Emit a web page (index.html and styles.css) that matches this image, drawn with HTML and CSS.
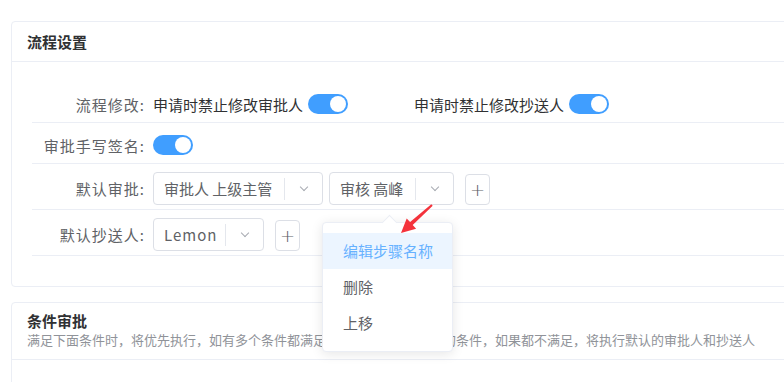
FILE: index.html
```html
<!DOCTYPE html>
<html lang="zh-CN">
<head>
  <meta charset="UTF-8">
  <title>流程设置</title>
  <link rel="stylesheet" href="styles.css">
</head>
<body>
  <div class="page">
    <div class="card">
      <div class="card-header">流程设置</div>
      <div class="form">
        <div class="row">
          <div class="label">流程修改:</div>
          <div class="field">
            <span class="opt">申请时禁止修改审批人</span>
            <span class="switch"></span>
            <span class="opt opt-2">申请时禁止修改抄送人</span>
            <span class="switch"></span>
          </div>
        </div>
        <div class="row">
          <div class="label">审批手写签名:</div>
          <div class="field"><span class="switch switch-only"></span></div>
        </div>
        <div class="row row-tall">
          <div class="label">默认审批:</div>
          <div class="field">
            <div class="select s-1"><span class="val">审批人 上级主管</span><span class="suffix"><i class="chev"></i></span></div>
            <div class="select s-2"><span class="val">审核 高峰</span><span class="suffix"><i class="chev"></i></span></div>
            <button class="plus">+</button>
          </div>
        </div>
        <div class="row row-tall">
          <div class="label">默认抄送人:</div>
          <div class="field">
            <div class="select s-3"><span class="val">Lemon</span><span class="suffix"><i class="chev"></i></span></div>
            <button class="plus">+</button>
          </div>
        </div>
      </div>
    </div>

    <div class="card card-2">
      <div class="card-header header-2">
        <div class="title">条件审批</div>
        <div class="sub">满足下面条件时，将优先执行，如有多个条件都满足，将执行第一个满足的条件，如果都不满足，将执行默认的审批人和抄送人</div>
      </div>
    </div>

    <div class="menu">
      <div class="menu-item active">编辑步骤名称</div>
      <div class="menu-item">删除</div>
      <div class="menu-item">上移</div>
    </div>

    <svg class="pointer" width="42" height="36" viewBox="0 0 42 36">
      <path d="M6 33 L11.7 18.4 L15.1 22.1 L36.3 4.3 L37.7 5.7 L17.7 25.1 L21.1 28.8 Z" fill="#f4333c"/>
    </svg>
  </div>
</body>
</html>
```

FILE: styles.css
```css
* { box-sizing: border-box; }
body { margin: 0; background: #fff; font-family: "Noto Sans CJK SC", "Noto Sans", sans-serif; overflow: hidden; }
.page { position: relative; width: 1000px; padding: 21px 0 0 11px; }

.card { border: 1px solid #ebeef5; border-radius: 4px; background: #fff; width: 900px; }
.card-header { height: 40px; line-height: 40px; padding-left: 15px; border-bottom: 1px solid #ebeef5; font-size: 15px; font-weight: bold; color: #303133; }
.form { padding: 20px 0 30px 20px; }

.row { display: flex; align-items: center; padding: 8px 0 4px; border-bottom: 1px solid #ebeef5; min-height: 41px; }
.row-tall { min-height: 46px; }
.label { width: 113px; text-align: right; font-size: 15px; color: #606266; margin-right: 8px; letter-spacing: 1px; }
.field { display: flex; align-items: center; font-size: 15px; color: #303133; }
.opt-2 { margin-left: 66px; }
.switch { position: relative; display: inline-block; width: 40px; height: 20px; border-radius: 10px; background: #409eff; margin-left: 5px; }
.switch::after { content: ""; position: absolute; right: 2px; top: 2px; width: 16px; height: 16px; border-radius: 50%; background: #fff; }
.switch-only { margin-left: 0; }

.select { display: flex; align-items: center; height: 33px; border: 1px solid #dcdfe6; border-radius: 4px; color: #606266; }
.select .val { flex: 1; padding-left: 10px; white-space: nowrap; }
.select .suffix { display: flex; align-items: center; justify-content: center; width: 38px; height: 22px; border-left: 1px solid #e4e7ed; }
.chev { width: 6px; height: 6px; border-right: 1px solid #a8abb2; border-bottom: 1px solid #a8abb2; transform: rotate(45deg); margin-top: -4px; }
.s-1 { width: 170px; }
.s-2 { width: 125px; margin-left: 6px; }
.s-3 { width: 111px; }
.s-3 .val { letter-spacing: 1px; }
.plus { width: 25px; height: 31px; margin-left: 11px; padding: 0; border: 1px solid #dcdfe6; border-radius: 4px; background: #fff; color: #606266; font-size: 18px; font-weight: 200; line-height: 27px; font-family: "DejaVu Sans", sans-serif; align-self: flex-end; }

.card-2 { margin-top: 15px; height: 120px; }
.header-2 { height: 57px; line-height: normal; padding-top: 8px; }
.header-2 .title { font-size: 15px; font-weight: bold; color: #303133; line-height: 20px; }
.header-2 .sub { font-size: 13px; font-weight: normal; color: #909399; line-height: 18px; white-space: nowrap; }

.menu { position: absolute; left: 322px; top: 222px; width: 131px; padding: 10px 0; background: #fff; border: 1px solid #ebeef5; border-radius: 4px; box-shadow: 0 2px 12px rgba(0, 0, 0, 0.1); }
.menu::before { content: ""; position: absolute; left: 61px; top: -6px; width: 10px; height: 10px; background: #fff; border-left: 1px solid #ebeef5; border-top: 1px solid #ebeef5; transform: rotate(45deg); }
.menu-item { height: 36px; line-height: 36px; padding-left: 20px; font-size: 15px; color: #606266; }
.menu-item.active { background: #ecf5ff; color: #66b1ff; }

.pointer { position: absolute; left: 395px; top: 200px; }
```
